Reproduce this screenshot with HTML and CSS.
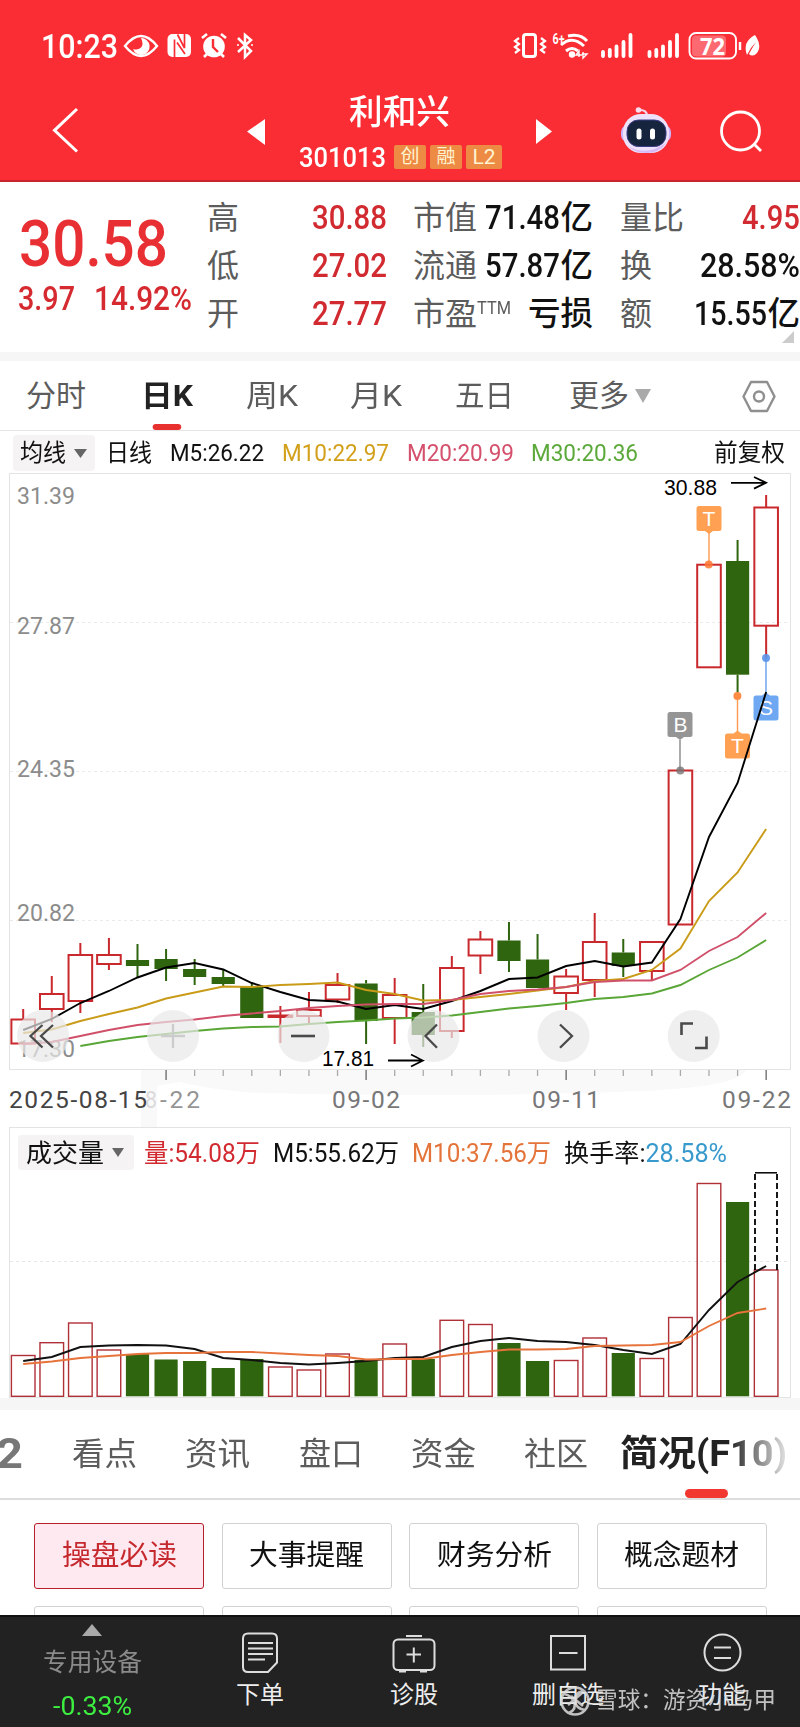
FILE: index.html
```html
<!DOCTYPE html>
<html lang="zh-CN">
<head>
<meta charset="utf-8">
<title>利和兴 301013</title>
<link rel="stylesheet" href="styles.css">
</head>
<body>
<header class="top">
  <div class="status">
    <span class="clock" data-fit="77">10:23</span>
    <svg class="status-left" width="136" height="32" viewBox="121 30 136 32" fill="none" stroke="#fff">
      <path d="M125 46Q133 36 141 36T157 46Q149 56 141 56T125 46Z" stroke-width="2.4"/>
      <path d="M141 38a8.500 8.500 0 1 1-8 11q5 1.500 8-1.500t0-9.500Z" fill="#fff" stroke="none"/>
      <rect x="167.500" y="34" width="23.500" height="23" rx="5" fill="#fff" stroke="none"/>
      <path d="M174.500 57V39.500M177.500 34.500l7 13.500V34M177 42.500l8 11.500" stroke="#fa2d34" stroke-width="1.700"/>
      <circle cx="214" cy="46.500" r="10.800" fill="#fff" stroke="none"/>
      <path d="M202 38l5-4M226 38l-5-4M208 53l-4 4M220 53l4 4" stroke-width="2.600"/>
      <path d="M213 39v8l5 5" stroke="#fa2d34" stroke-width="2.400"/>
      <path d="M238 38l13 13-6 6V35l6 5-13 12" stroke-width="2.500"/>
      <circle cx="238" cy="45" r="1" fill="#fff" stroke="none"/>
      <circle cx="252" cy="45" r="1" fill="#fff" stroke="none"/>
    </svg>
    <svg class="status-right" width="252" height="32" viewBox="511 30 252 32" fill="none" stroke="#fff">
      <rect x="523.500" y="34.500" width="12" height="22" rx="2.500" stroke-width="3"/>
      <path d="M519 38l-4 3 4 3-4 3 4 3-4 3M541 38l4 3-4 3 4 3-4 3 4 3" stroke-width="2.200"/>
      <text x="552.500" y="44" class="wifi-gen" textLength="12" lengthAdjust="spacingAndGlyphs">6+</text>
      <path d="M568 36q12-3 19 5M561 45q11-10 23 1M566 51q6-5 12 0" stroke-width="3"/>
      <circle cx="572" cy="54.500" r="3.200" fill="#fff" stroke="none"/>
      <path d="M579 57V51l-3 4h6M583 52v6l4-4h-5" stroke-width="1.400"/>
      <path d="M603 52v4M609.800 50v6M616.500 46.500V56M623.500 42v14M630.500 35v21M649.500 52v4M656.300 50v6M663 46.500V56M670 42v14M677 35v21" stroke-width="3.800" stroke-linecap="round"/>
      <rect x="692" y="35.500" width="34" height="21" rx="4" fill="#fd6970" stroke="none"/>
      <rect x="689.500" y="33" width="46.500" height="25.500" rx="6.500" stroke-width="1.900"/>
      <text x="700" y="54.500" class="battery" textLength="25" lengthAdjust="spacingAndGlyphs">72</text>
      <path d="M740 42v8" stroke-width="2.500"/>
      <path d="M755 35q8 12 1 19-4 3-7 0 2-4 7-12-6 6-9 13-5-13 8-20Z" fill="#fff" stroke="none"/>
    </svg>
  </div>
  <div class="title-bar">
    <svg class="back" width="30" height="48" viewBox="50 106 30 48" fill="none" stroke="#fff" stroke-width="3"><path d="M77 109L54.500 130.300 77 151.500"/></svg>
    <svg class="prev" width="20" height="28" viewBox="246 117 20 28" fill="#fff"><path d="M247 131.500L265 119v26Z"/></svg>
    <div class="stock">
      <h1 data-fit="101">利和兴</h1>
      <div class="code-row">
        <span class="code" data-fit="87">301013</span>
        <i class="badge">创</i><i class="badge">融</i><i class="badge wide">L2</i>
      </div>
    </div>
    <svg class="next" width="18" height="28" viewBox="535 117 18 28" fill="#fff"><path d="M552 131.500L536 119v25Z"/></svg>
    <svg class="robot" width="52" height="50" viewBox="620 105 52 50">
      <path d="M640 110q7 0 7 6" fill="none" stroke="#f5d8ec" stroke-width="2.200"/>
      <circle cx="638.500" cy="110" r="2.800" fill="#f9dcee"/>
      <rect x="621" y="125" width="50" height="17" rx="7" fill="#ccb5ff"/>
      <rect x="623" y="114" width="46" height="39" rx="18" fill="#eee2fb"/>
      <path d="M628 146q18 11 38-3-6 10-20 10-11 0-18-7Z" fill="#d7b9f6"/>
      <rect x="627" y="120" width="39" height="26.500" rx="11.500" fill="#17243e" stroke="#3c3d86" stroke-width="1"/>
      <rect x="636.500" y="128.500" width="5" height="11" rx="2.500" fill="#fff"/><rect x="650" y="128.500" width="5" height="11" rx="2.500" fill="#fff"/>
    </svg>
    <svg class="search" width="44" height="44" viewBox="718 109 44 44" fill="none" stroke="#fff" stroke-width="2.800"><circle cx="739.500" cy="131" r="19"/><path d="M752.500 143.500l7.500 7.500"/></svg>
  </div>
</header>

<section class="quote">
  <div class="price-box">
    <div class="price"><span data-fit="149">30.58</span></div>
    <div class="change"><span data-fit="57">3.97</span><span data-fit="98">14.92%</span></div>
  </div>
  <dl class="col c1">
    <div><dt>高</dt><dd class="up"><span data-fit="75">30.88</span></dd></div>
    <div><dt>低</dt><dd class="up"><span data-fit="75">27.02</span></dd></div>
    <div><dt>开</dt><dd class="up"><span data-fit="75">27.77</span></dd></div>
  </dl>
  <dl class="col c2">
    <div><dt>市值</dt><dd><span data-fit="75">71.48</span>亿</dd></div>
    <div><dt>流通</dt><dd><span data-fit="75">57.87</span>亿</dd></div>
    <div><dt>市盈<sup data-fit="34">TTM</sup></dt><dd>亏损</dd></div>
  </dl>
  <dl class="col c3">
    <div><dt>量比</dt><dd class="up"><span data-fit="58">4.95</span></dd></div>
    <div><dt>换</dt><dd><span data-fit="100">28.58%</span></dd></div>
    <div><dt>额</dt><dd><span data-fit="73">15.55</span>亿</dd></div>
  </dl>
  <svg class="corner" width="12" height="12" viewBox="0 0 12 12" fill="#ccc"><path d="M12 0v12H0Z"/></svg>
</section>

<nav class="periods">
  <a data-fit="60">分时</a><a class="on" data-fit="52">日K</a><a data-fit="52">周K</a><a data-fit="52">月K</a><a data-fit="59">五日</a>
  <a class="more" data-fit="60">更多</a>
  <svg class="more-arrow" width="16" height="14" viewBox="0 0 16 14" fill="#aaa"><path d="M0 0h16L8 14Z"/></svg>
  <svg class="gear" width="34" height="34" viewBox="740 378 34 34" fill="none" stroke="#8f8f8f" stroke-width="2.400"><path d="M749 381h16l7.500 14.500-7.500 14.500h-16l-7.500-14.500Z" stroke-linejoin="round"/><circle cx="757" cy="395.500" r="5"/></svg>
</nav>

<section class="ma-row">
  <span class="chip"><span data-fit="46">均线</span><svg width="13" height="9" viewBox="0 0 13 9" fill="#666"><path d="M0 0h13L6.500 9Z"/></svg></span>
  <span class="name" data-fit="46">日线</span>
  <span class="m5" data-fit="94">M5:26.22</span>
  <span class="m10" data-fit="107">M10:22.97</span>
  <span class="m20" data-fit="107">M20:20.99</span>
  <span class="m30" data-fit="107">M30:20.36</span>
  <span class="adj" data-fit="71">前复权</span>
</section>

<svg class="kline" width="800" height="654" viewBox="0 473 800 654">
  <path d="M141 1070H746Q738 1087 640 1091 480 1098 260 1093 210 1090 180 1082L157 1086V1130H141Z" fill="#faf9fa"/>
  <g fill="none" stroke="#e3e3e3">
    <rect x="9.500" y="473.500" width="781" height="596"/>
    <path d="M10 622.500H790M10 771.500H790M10 920.500H790" stroke="#ebebeb" stroke-dasharray="3 3"/>
  </g>
  <g class="scale">
    <text x="17" y="504" textLength="58" lengthAdjust="spacingAndGlyphs">31.39</text>
    <text x="17" y="634" textLength="58" lengthAdjust="spacingAndGlyphs">27.87</text>
    <text x="17" y="777" textLength="58" lengthAdjust="spacingAndGlyphs">24.35</text>
    <text x="17" y="920.500" textLength="58" lengthAdjust="spacingAndGlyphs">20.82</text>
    <text x="17" y="1056.500" textLength="58" lengthAdjust="spacingAndGlyphs">17.30</text>
  </g>
  <g id="candles"></g>
  <g id="marks">
    <g stroke-width="1.400">
      <path d="M680 740v30" stroke="#888"/><circle cx="680.300" cy="770.500" r="4" fill="#777" fill-opacity=".8"/>
      <path d="M709 533v31" stroke="#ff9a50"/><circle cx="708.700" cy="564.500" r="4" fill="#ff7832" fill-opacity=".85"/>
      <path d="M737.500 696v35" stroke="#ff9a50"/><circle cx="737.400" cy="696" r="4" fill="#ff8b45"/>
      <path d="M766 658v35" stroke="#659fea"/><circle cx="766" cy="658" r="4" fill="#5a94ea" fill-opacity=".9"/>
    </g>
    <path d="M670 712h20a2.500 2.500 0 0 1 2.500 2.500v20a2.500 2.500 0 0 1-2.500 2.500h-6l-4 3-4-3h-6a2.500 2.500 0 0 1-2.500-2.500v-20a2.500 2.500 0 0 1 2.500-2.500Z" fill="#959595"/>
    <path d="M699 506h20a2.500 2.500 0 0 1 2.500 2.500v20a2.500 2.500 0 0 1-2.500 2.500h-6l-4 3-4-3h-6a2.500 2.500 0 0 1-2.500-2.500v-20a2.500 2.500 0 0 1 2.500-2.500Z" fill="#ffa052"/>
    <path d="M727.500 733.500h6l4-3 4 3h6a2.500 2.500 0 0 1 2.500 2.500v20a2.500 2.500 0 0 1-2.500 2.500h-20a2.500 2.500 0 0 1-2.500-2.500v-20a2.500 2.500 0 0 1 2.500-2.500Z" fill="#ffa052"/>
    <path d="M756 695.500h6l4-3 4 3h6a2.500 2.500 0 0 1 2.500 2.500v20a2.500 2.500 0 0 1-2.500 2.500h-20a2.500 2.500 0 0 1-2.500-2.500v-20a2.500 2.500 0 0 1 2.500-2.500Z" fill="#6ea8f3"/>
    <g class="mark"><text x="680.500" y="732">B</text><text x="709" y="526">T</text><text x="737.500" y="753">T</text><text x="766" y="715">S</text></g>
  </g>
  <g id="averages"></g>
  <g class="extreme">
    <text x="664" y="495" textLength="53" lengthAdjust="spacingAndGlyphs">30.88</text>
    <text x="322" y="1066" textLength="52" lengthAdjust="spacingAndGlyphs">17.81</text>
    <path d="M731 482.800h35M754 477l12 5.800-12 5.800M388 1060.500h35M411 1054.500l12 6-12 6" fill="none" stroke="#000" stroke-width="1.800"/>
  </g>
  <g id="ticks"></g>
  <g class="dates">
    <text x="145" y="1108" textLength="12" lengthAdjust="spacingAndGlyphs" fill-opacity=".25">8</text>
    <text x="160" y="1108" textLength="40" lengthAdjust="spacing" fill-opacity=".8">-22</text>
    <text x="332" y="1108" textLength="68" lengthAdjust="spacing">09-02</text>
    <text x="532" y="1108" textLength="68" lengthAdjust="spacing">09-11</text>
    <text x="722" y="1108" textLength="69" lengthAdjust="spacing">09-22</text>
    <text class="first" x="9" y="1108" textLength="138" lengthAdjust="spacing">2025-08-15</text>
  </g>
  <g fill="#e8e8e8" fill-opacity=".7">
    <circle cx="43" cy="1036" r="26"/><circle cx="173" cy="1036" r="26"/><circle cx="303.500" cy="1036" r="26"/><circle cx="433.500" cy="1036" r="26"/><circle cx="563.500" cy="1036" r="26"/><circle cx="693.700" cy="1036" r="26"/>
  </g>
  <g fill="none" stroke="#4a4a4a" stroke-width="2.300">
    <path d="M42.500 1025l-12 11 12 11.500M53 1025l-12 11 12 11.500"/>
    <path d="M161 1036h24M173 1024v24" stroke="#ccc"/>
    <path d="M291 1036h24" stroke-width="2.600"/>
    <path d="M437 1024.500l-11.500 11.500 11.500 11.800M560 1024.500l12 11.500-12 11.800"/>
    <path d="M681.500 1035v-11.500h11.500M706.500 1036.500v11.500H695" stroke-width="2.600"/>
  </g>
</svg>

<section class="volume">
  <div class="volume-legend">
    <span class="chip"><span data-fit="78">成交量</span><svg width="12" height="9" viewBox="0 0 12 9" fill="#666"><path d="M0 0h12L6 9Z"/></svg></span>
    <span class="up" data-fit="116">量:54.08万</span>
    <span class="v5" data-fit="126">M5:55.62万</span>
    <span class="v10" data-fit="139">M10:37.56万</span>
    <span class="turn" data-fit="163">换手率:<b>28.58%</b></span>
  </div>
  <svg width="780" height="226" viewBox="10 1171 780 226">
    <path d="M10 1261.500H790" stroke="#e6e6e6" stroke-dasharray="3 3"/>
    <g id="volumes"></g>
    <path d="M755 1270v-97M777 1270v-97" stroke="#000" stroke-width="1.800" stroke-dasharray="6 3"/><path d="M755 1172.800h22" stroke="#000" stroke-width="1.500"/>
    <g id="volume-averages"></g>
  </svg>
</section>

<nav class="sections">
  <b class="level2" data-fit="27">2</b>
  <a data-fit="65">看点</a><a data-fit="65">资讯</a><a data-fit="64">盘口</a><a data-fit="65">资金</a><a data-fit="64">社区</a>
  <a class="on" data-fit="167">简况(F10)</a>
</nav>

<main class="links">
  <a class="on"><span data-fit="115">操盘必读</span></a><a><span data-fit="115">大事提醒</span></a><a><span data-fit="115">财务分析</span></a><a><span data-fit="115">概念题材</span></a>
  <a></a><a></a><a></a><a></a>
</main>

<footer class="bar">
  <div class="sector">
    <svg width="20" height="12" viewBox="0 0 20 12" fill="#aaa"><path d="M10 0l10 12H0Z"/></svg>
    <span data-fit="99">专用设备</span>
    <b data-fit="79">-0.33%</b>
  </div>
  <div class="action">
    <svg width="40" height="42" viewBox="241 1631 40 42" fill="none" stroke="#ddd" stroke-width="2"><path d="M249 1633.500h24q5 0 5 5v24l-9 9.500h-20q-5 0-5-5v-28.500q0-5 5-5ZM249 1643h25M249 1648.500h25M249 1654h25M249 1659.500h17"/></svg>
    <span data-fit="48">下单</span>
  </div>
  <div class="action">
    <svg width="44" height="42" viewBox="393 1631 44 42" fill="none" stroke="#ddd" stroke-width="2"><rect x="394.500" y="1639.500" width="41" height="30.500" rx="4.500"/><path d="M407 1636h16M400 1671.500h7M421 1671.500h7M407.500 1654.500h14.500M414.800 1647.500v15"/></svg>
    <span data-fit="48">诊股</span>
  </div>
  <div class="action">
    <svg width="40" height="42" viewBox="548 1631 40 42" fill="none" stroke="#ddd" stroke-width="2"><rect x="551" y="1636" width="34" height="33.500"/><path d="M559 1653h18.500"/></svg>
    <span data-fit="72">删自选</span>
  </div>
  <div class="action">
    <svg width="40" height="42" viewBox="702 1631 40 42" fill="none" stroke="#ddd" stroke-width="2"><circle cx="722.500" cy="1652.500" r="18"/><path d="M714 1647.500h17M714 1658h17"/></svg>
    <span data-fit="48">功能</span>
  </div>
  <div class="watermark">
    <svg width="32" height="32" viewBox="0 0 32 32" fill="none" stroke="#ddd" stroke-width="2.600"><circle cx="16" cy="16" r="13.500"/><path d="M5 9q7 1 10 8t-5 11M24 6q-9 2-8 10t10 9M9 20L23 8M12 11l12 10"/></svg>
    <span data-fit="181">雪球：游资小马甲</span>
  </div>
</footer>
<script src="chart.js"></script>
</body>
</html>
```
FILE: styles.css
```css
* { box-sizing: border-box; }
html, body { margin: 0; padding: 0; }
body {
  width: 800px; height: 1727px; overflow: hidden; background: #fff; color: #111;
  font-family: Roboto, "Noto Sans CJK SC", sans-serif;
}
svg { display: block; flex: none; }
[data-fit] { display: inline-block; white-space: nowrap; transform-origin: 0 50%; flex: none; }
h1, dl, dd { margin: 0; }
.up { color: #d12a30; }

.top { height: 182px; background: #fa2d34; border-bottom: 2px solid #c9252d; color: #fff; }
.status { height: 92px; display: flex; align-items: center; padding-left: 41px; }
.clock { font-size: 33px; font-weight: 500; }
.status-left { margin-left: 3px; }
.status-right { margin-left: 254px; }
.wifi-gen { font-size: 15px; font-weight: 700; fill: #fff; stroke: none; }
.battery { font: 700 23px "Open Sans", sans-serif; fill: #fff; stroke: none; }

.title-bar { height: 88px; display: flex; align-items: flex-start; padding-left: 50px; }
.back { margin-top: 14px; }
.prev { margin: 25px 0 0 166px; }
.stock { width: 203px; margin-left: 33px; }
.stock h1 { display: block; width: max-content; margin-left: 50px; font-size: 34px; line-height: 40px; font-weight: 500; }
.code-row { display: flex; align-items: center; height: 26px; margin-top: 12px; }
.code { font-size: 28.500px; font-weight: 500; }
.badge { width: 32px; height: 24px; margin-left: 4px; border-radius: 2px; background: #ed8a43; color: #fff3d0; font: normal 19px/24px Roboto, "Noto Sans CJK SC", sans-serif; text-align: center; }
.code + .badge { margin-left: 8px; }
.badge.wide { width: 36px; font-size: 21px; }
.next { margin: 25px 0 0 33px; }
.robot { margin: 13px 0 0 67px; }
.search { margin: 17px 0 0 47px; }

.quote { position: relative; height: 179px; border-bottom: 9px solid #f6f6f6; display: grid; grid-template-columns: 207px 180px 206px 207px; }
.price-box { padding: 24px 0 0 18px; color: #e83034; font-weight: 500; }
.price { padding-left: 1px; font-size: 64.500px; line-height: 76px; }
.change { display: flex; gap: 19px; font-size: 33px; line-height: 34px; color: #d52a30; }
.col { padding-top: 12px; font-size: 32px; }
.col > div { height: 48px; line-height: 48px; display: flex; justify-content: space-between; }
.c2 { padding-left: 26px; }
.c3 { padding-left: 27px; }
.col dt { color: #5c5c5c; }
.col dd { font-size: 32.500px; font-weight: 500; white-space: nowrap; }
.col sup { font-size: 18px; line-height: 20px; vertical-align: 11px; }
.corner { position: absolute; right: 6px; bottom: 9px; }

.periods { height: 70px; display: flex; align-items: center; border-bottom: 1px solid #e6e6e6; padding-left: 26px; font-size: 30px; line-height: 69px; color: #5c5c5c; }
.periods a { margin-right: 52.500px; }
.periods a:first-child { margin-right: 55px; }
.periods .on { position: relative; color: #222; font-weight: 700; }
.periods .on::after { content: ""; position: absolute; left: 11px; width: 27px; bottom: 0; height: 6px; border-radius: 3px; background: #e8302f; }
.periods .more { margin: 0 0 0 3px; }
.more-arrow { margin-left: 6px; }
.gear { margin-left: 91px; }

.ma-row { height: 42px; display: flex; align-items: center; padding: 2px 0 0 13px; font-size: 24px; line-height: 36px; }
.chip { display: flex; align-items: center; gap: 8px; background: #f5f3f4; border-radius: 4px; }
.ma-row .chip { width: 82px; height: 36px; padding-left: 7px; margin-right: 11px; }
.m5 { margin-left: 18px; }
.m10 { margin-left: 18px; color: #d3a01c; }
.m20 { margin-left: 18px; color: #d4506c; }
.m30 { margin-left: 17px; color: #5ca93b; }
.adj { margin-left: 76px; }

.scale { font-size: 24.500px; fill: #8c8c8c; }
.dates { font-size: 24.500px; fill: #777; }
.dates .first { fill: #444; }
.extreme { font-size: 22px; font-family: "Liberation Sans", sans-serif; }
.mark { font: 21px "Liberation Sans", sans-serif; fill: #fff; text-anchor: middle; }

.volume { width: 782px; height: 271px; margin-left: 9px; border: 1px solid #e3e3e3; }
.volume-legend { display: flex; align-items: center; height: 43px; padding: 6px 0 0 8px; font-size: 25.500px; line-height: 36px; }
.volume .chip { width: 116px; height: 35px; padding-left: 8px; margin-right: 10px; }
.v5 { margin-left: 13px; }
.v10 { margin-left: 13px; color: #e4743a; }
.turn { margin-left: 13px; }
.turn b { font-weight: 400; color: #3799cc; }

.sections { position: relative; height: 102px; border-top: 12px solid #f6f6f6; border-bottom: 2px solid #ddd; display: flex; align-items: center; font-size: 32px; line-height: 88px; color: #5c5c5c; }
.level2 { margin-left: -4px; font-size: 42px; color: #777; margin-right: 49px; }
.sections a { margin-right: 48.300px; }
.sections a.on { margin: 0 0 0 -16px; font-size: 36px; font-weight: 700; color: transparent; background: linear-gradient(90deg, #222 0 66%, #777 80%, #ddd 99%); -webkit-background-clip: text; background-clip: text; }
.sections::after { content: ""; position: absolute; left: 685px; bottom: 0; width: 43px; height: 9px; border-radius: 5px; background: #f23630; }

.links { height: 115px; overflow: hidden; display: grid; grid-template-columns: repeat(4, 170px); grid-auto-rows: 66px; column-gap: 17.500px; row-gap: 16.500px; padding: 23px 0 0 34px; }
.links a { border: 1px solid #d2d2d2; border-radius: 3px; text-align: center; font-size: 28.500px; line-height: 63px; }
.links a.on { background: #ffe9f0; border: 1.500px solid #b51f28; color: #c5282d; }

.bar { position: relative; height: 112px; background: #222; border-top: 2px solid #111; display: grid; grid-template-columns: 183px 154px 154px 154px 154px; color: #eee; font-size: 24px; }
.sector { display: flex; flex-direction: column; align-items: flex-start; padding: 7px 0 0 43px; color: #8b8b8b; }
.sector svg { margin-left: 39px; }
.sector span { line-height: 30px; margin-top: 12px; font-size: 24.500px; }
.sector b { margin: 14px 0 0 10px; font-size: 25.500px; line-height: 28px; font-weight: 400; color: #3dee41; }
.action { display: flex; flex-direction: column; align-items: center; padding-top: 14px; }
.action span { line-height: 28px; margin-top: 8px; }
.watermark { position: absolute; left: 559px; top: 68px; display: flex; align-items: center; gap: 4px; color: #ddd; opacity: .85; font-size: 23px; line-height: 30px; }
```
FILE: chart.js
```js
const UP = '#c9282d', DOWN = '#30650f';
const x = i => 23.2 + i * 28.575;

// direction, high, body top, body bottom, low
const candles = [
  [1,1009,1019.5,1043.5,1043.5],[1,976,994,1009,1022],[1,943,955,1001,1013],[1,938,955,964,970],
  [0,944,960,966,978],[0,949,959,969,981],[0,959,969,977,985],[0,970,977,984,986],[0,983,987,1018,1018],
  [1,1006,1015.5,1017,1043],[1,992,1010,1016,1025],[1,973,985,999.5,1003],[0,980,983.5,1021,1044],
  [1,978,995,1018,1044],[0,984,1012,1035,1047],[1,956,968,1031,1038],[1,931,939.5,955.5,974],
  [0,922,940.5,961,972],[0,934,959.5,988,988],[1,969,976.5,993,1010],[1,913,942,980,997],
  [0,939,952.5,966,977],[1,942,942,971,980],[1,770.5,770.5,924.5,924.5],[1,564.7,564.7,667.3,667.3],
  [0,540,561,674.7,696],[1,495,507.5,625.7,657.7]
];
const averages = [
  ['#000',0,[1030,1019,1003,991,977.5,967.5,963,969.5,983,992,1000,1001.5,1009,1005,1009,1001,991,979,977.5,966,961,966.5,962.5,919,837,783,692]],
  ['#c99b18',0,[1033,1029.5,1021,1014,1007.5,998.5,992.5,986.5,987,985,984,982.5,990,994,1000.5,1000,997,994,990.5,987,981,979,970,948.5,901,872.5,829]],
  ['#d0506a',0,[1044,1042,1036,1030,1025,1022,1019.5,1016,1013.5,1011,1008,1006,1004.5,1004,1004,1000,994,991,989.5,987,982,980.5,980.5,970,951,937,913]],
  ['#5aa637',2,[1046,1041,1037,1034,1031,1028.5,1027,1026.5,1024,1022,1020.5,1018.5,1017.5,1015.5,1012,1008.5,1006,1003,999,997,993.5,985,970,957.5,940]]
];
const volumes = [1355.5,1342.7,1323,1350,1354,1359.5,1361,1368,1359,1367,1370,1354,1360,1344,1359,1320.3,1324.5,1343,1361,1360.5,1338,1353,1358.5,1317.5,1183.5,1202,1270];
const volumeAverages = [
  ['#111',0,[1361,1357,1347,1345.5,1345,1345.5,1349,1358,1360,1363,1364.5,1363,1361,1358,1357,1347,1341,1338,1341,1342,1345,1350,1354,1344,1310,1282,1266]],
  ['#e7733c',0,[1364,1361.5,1358,1356,1354,1353,1353,1352,1352,1353.5,1355,1356,1359.5,1359,1359,1355,1352,1349.5,1349.5,1349,1346,1345.5,1345,1342,1326,1313,1308.5]]
];
const line = ([color, start, ys]) =>
  `<polyline fill="none" stroke="${color}" stroke-width="1.9" points="${ys.map((y, i) => x(i + start) + ',' + y).join(' ')}"/>`;
const body = (i, up, top, bottom, w) => up
  ? `<rect x="${x(i) - 11.8}" y="${top}" width="23.6" height="${bottom - top}" fill="none" stroke="${w < 1.5 ? '#b03038' : UP}" stroke-width="${w}"/>`
  : `<rect x="${x(i) - 11.6}" y="${top}" width="23.2" height="${bottom - top}" fill="${DOWN}"/>`;

document.getElementById('candles').innerHTML = candles.map(([up, high, top, bottom, low], i) =>
  `<path d="M${x(i)} ${high}V${top}M${x(i)} ${bottom}V${low}" stroke="${up ? UP : DOWN}" stroke-width="2"/>` + body(i, up, top, bottom, 2)).join('');
document.getElementById('averages').innerHTML = averages.map(line).join('');
document.getElementById('volumes').innerHTML = volumes.map((top, i) => body(i, candles[i][0], top, 1396.3, 1.4)).join('');
document.getElementById('volume-averages').innerHTML = volumeAverages.map(line).join('');
document.getElementById('ticks').innerHTML = candles.map((c, i) => i < 5 ? '' :
  `<path d="M${x(i)} 1070v${(i - 5) % 7 ? 6 : 10}" stroke="${(i - 5) % 7 ? '#aaa' : '#666'}" stroke-width="1.3"/>`).join('');

document.querySelectorAll('[data-fit]').forEach(el => {
  const natural = el.getBoundingClientRect().width, wanted = +el.dataset.fit;
  const margin = parseFloat(getComputedStyle(el).marginRight) || 0;
  el.style.transform = `scaleX(${wanted / natural})`;
  el.style.marginRight = `${margin + wanted - natural}px`;
});
```
